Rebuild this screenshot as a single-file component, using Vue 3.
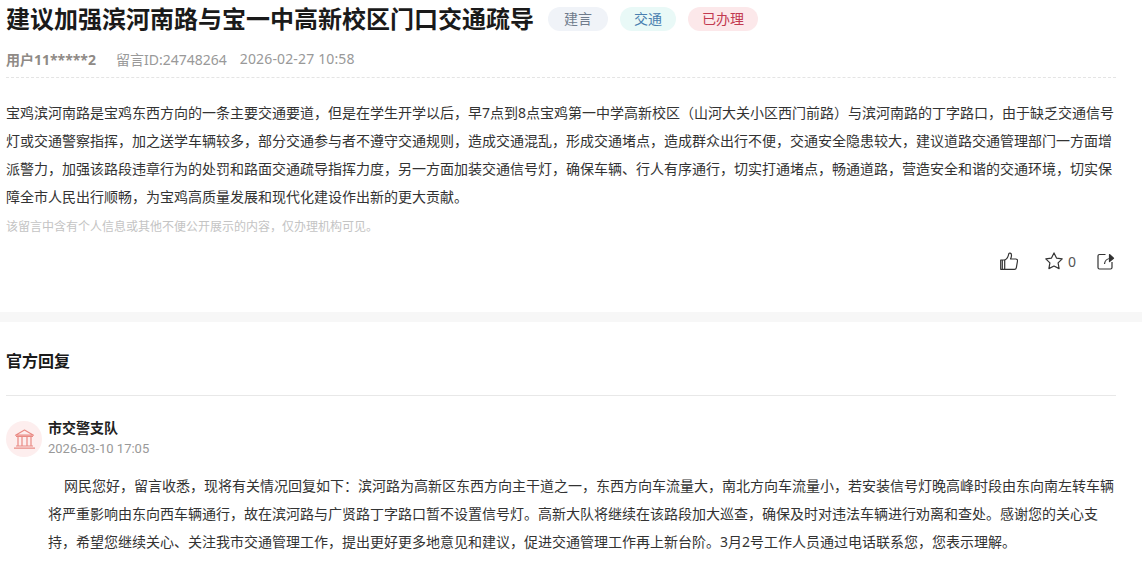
<template>
  <div class="page">
    <section class="main">
      <div class="title-row">
        <h1 class="title">建议加强滨河南路与宝一中高新校区门口交通疏导</h1>
        <span class="tag tag-gray">建言</span>
        <span class="tag tag-green">交通</span>
        <span class="tag tag-red">已办理</span>
      </div>
      <div class="meta">
        <b class="user">用户11*****2</b>
        <span class="id">留言ID:24748264</span>
        <span class="date">2026-02-27 10:58</span>
      </div>
      <p class="body">宝鸡滨河南路是宝鸡东西方向的一条主要交通要道，但是在学生开学以后，早7点到8点宝鸡第一中学高新校区（山河大关小区西门前路）与滨河南路的丁字路口，由于缺乏交通信号灯或交通警察指挥，加之送学车辆较多，部分交通参与者不遵守交通规则，造成交通混乱，形成交通堵点，造成群众出行不便，交通安全隐患较大，建议道路交通管理部门一方面增派警力，加强该路段违章行为的处罚和路面交通疏导指挥力度，另一方面加装交通信号灯，确保车辆、行人有序通行，切实打通堵点，畅通道路，营造安全和谐的交通环境，切实保障全市人民出行顺畅，为宝鸡高质量发展和现代化建设作出新的更大贡献。</p>
      <p class="note">该留言中含有个人信息或其他不便公开展示的内容，仅办理机构可见。</p>
      <div class="actions">
        <svg class="icon" viewBox="0 0 18 18" fill="none" stroke="#333" stroke-width="1.2" stroke-linejoin="round"><path d="M.7 8h4v9.300h-4z"/><path d="M2.300 8v9.300"/><path d="M4.700 8c2-.8 3.500-3 4-6 .2-1.300 2.800-1.300 2.800 1.200 0 1.300-.4 2.600-1 3.800h5.300c1.200 0 1.900 1 1.700 2l-1.200 6.800c-.2.900-.9 1.500-1.800 1.500H4.700"/></svg>
        <span class="action">
          <svg class="icon" viewBox="0 0 18 18" fill="none" stroke="#333" stroke-width="1.200" stroke-linejoin="round"><path d="M9 .9l2.500 5.200 5.700.8-4.100 4 1 5.700L9 14l-5.100 2.600 1-5.700-4.100-4 5.700-.8z"/></svg>
          <span class="count">0</span>
        </span>
        <svg class="icon" viewBox="0 0 18 18" fill="none" stroke="#333" stroke-width="1.200" stroke-linejoin="round"><path d="M8.500 2.500H2.500a1.500 1.500 0 0 0-1.500 1.500v11.500A1.500 1.500 0 0 0 2.500 17h11a1.500 1.500 0 0 0 1.500-1.500V10"/><path d="M7.500 12c.2-3 2.500-5.500 6-5.500"/><path d="M12.500 2.500l4 3.700-4 3.300z" fill="#333"/></svg>
      </div>
    </section>
    <div class="band"></div>
    <section class="reply">
      <h2 class="reply-head">官方回复</h2>
      <div class="org">
        <div class="avatar">
          <svg viewBox="0 0 21 20" class="bank" fill="none" stroke="#e98a84" stroke-width="1.200"><path d="M1.500 6.200L10.500 1l9 5.200z" stroke-linejoin="round"/><path d="M2 7.500h17M4 7.500v9.500M8 7.500v9.500M13 7.500v9.500M17 7.500v9.500M2 17h17M0 19.200h21"/></svg>
        </div>
        <div class="org-info">
          <div class="org-name">市交警支队</div>
          <div class="org-date">2026-03-10 17:05</div>
        </div>
      </div>
      <p class="reply-text">网民您好，留言收悉，现将有关情况回复如下：滨河路为高新区东西方向主干道之一，东西方向车流量大，南北方向车流量小，若安装信号灯晚高峰时段由东向南左转车辆将严重影响由东向西车辆通行，故在滨河路与广贤路丁字路口暂不设置信号灯。高新大队将继续在该路段加大巡查，确保及时对违法车辆进行劝离和查处。感谢您的关心支持，希望您继续关心、关注我市交通管理工作，提出更好更多地意见和建议，促进交通管理工作再上新台阶。3月2号工作人员通过电话联系您，您表示理解。</p>
    </section>
  </div>
</template>

<script setup>
</script>

<style>
html, body { margin: 0; background: #fff; overflow: hidden; }
</style>

<style scoped>
.page {
  width: 1142px;
  height: 581px;
  overflow: hidden;
  font-family: "Noto Sans", "Noto Sans CJK SC", sans-serif;
  color: #333;
}
.main { padding: 0 26px 0 6px; }
.title-row { display: flex; align-items: center; height: 38px; }
.title { margin: 0 14px 0 0; font-size: 24px; line-height: 38px; font-weight: 700; color: #1a1a1a; }
.tag {
  height: 24px;
  line-height: 24px;
  padding: 0 14px;
  border-radius: 12px;
  font-size: 14px;
  margin-right: 12px;
}
.tag-gray { background: #f0f3f8; color: #6f7b8c; padding: 0 16px; }
.tag-green { background: #e9f9f7; color: #4a80b0; }
.tag-red { background: #fce8ea; color: #c23a50; }
.meta {
  display: flex;
  align-items: center;
  box-sizing: border-box;
  height: 40px;
  padding-top: 2px;
  border-bottom: 1px dashed #e4e4e4;
  font-size: 14px;
  color: #999;
}
.user { color: #8f8a86; margin-right: 20px; }
.id { margin-right: 13px; }
.date { letter-spacing: 0.15px; }
.body { margin: 21px 0 0; font-size: 14px; line-height: 28px; color: #333; }
.note { margin: 7px 0 0; font-size: 12px; line-height: 18px; color: #c4c4c4; }
.actions { display: flex; align-items: center; justify-content: flex-end; gap: 21px; margin-top: 14px; height: 22px; padding-right: 1px; }
.icon { width: 18px; height: 18px; display: block; }
.actions > .icon:first-child { margin-right: 6px; }
.action { display: flex; align-items: center; gap: 5px; }
.count { font-size: 14px; color: #555; }
.band { height: 10px; background: #f7f7f7; margin-top: 40px; }
.reply { padding: 0 26px 0 6px; }
.reply-head {
  margin: 0;
  height: 73px;
  line-height: 78px;
  font-size: 16px;
  font-weight: 700;
  color: #1a1a1a;
  border-bottom: 1px solid #e8e8e8;
}
.org { display: flex; align-items: center; margin-top: 23px; gap: 6px; }
.avatar {
  width: 36px;
  height: 36px;
  border-radius: 50%;
  background: #fdeeee;
  display: flex;
  align-items: center;
  justify-content: center;
}
.bank { width: 21px; height: 20px; }
.org-name { font-size: 14px; font-weight: 700; line-height: 18px; color: #222; }
.org-date { font-size: 13px; font-family: Roboto, sans-serif; line-height: 18px; color: #999; margin-top: 3px; }
.reply-text { margin: 14px 0 0 42px; font-size: 14px; line-height: 28px; text-indent: 16px; color: #333; }
</style>
